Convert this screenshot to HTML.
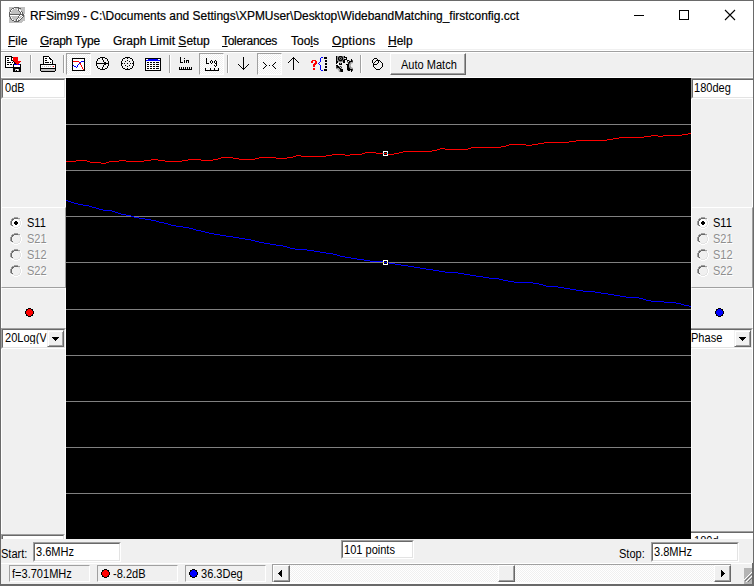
<!DOCTYPE html>
<html><head><meta charset="utf-8">
<style>
*{margin:0;padding:0;box-sizing:border-box}
html,body{width:754px;height:586px;overflow:hidden;background:#f0f0f0}
body{position:relative;font-family:"Liberation Sans",sans-serif;color:#000}
.a{position:absolute}
.t{position:absolute;white-space:nowrap;line-height:1}
.r{position:absolute}
.mi{position:absolute;top:34px;font-size:12px;line-height:14px;white-space:nowrap;-webkit-text-stroke:0.2px #000}
.u{text-decoration:underline;text-underline-offset:1px}
.sep{position:absolute;top:55px;width:2px;height:18px;border-left:1px solid #a0a0a0;border-right:1px solid #fff}
.pressed{position:absolute;top:53px;width:25px;height:22px;border-top:1px solid #a0a0a0;border-left:1px solid #a0a0a0;border-right:1px solid #fff;border-bottom:1px solid #fff;
 background-color:#f0f0f0;background-image:linear-gradient(45deg,#fff 25%,transparent 25%,transparent 75%,#fff 75%),linear-gradient(45deg,#fff 25%,transparent 25%,transparent 75%,#fff 75%);background-size:2px 2px;background-position:0 0,1px 1px}
.edit{position:absolute;background:#fff;border-top:1px solid #a0a0a0;border-left:1px solid #a0a0a0;border-right:1px solid #fff;border-bottom:1px solid #fff}
.edit::before{content:"";position:absolute;left:0;top:0;right:0;bottom:0;border-top:1px solid #696969;border-left:1px solid #696969;border-right:1px solid #e3e3e3;border-bottom:1px solid #e3e3e3}
.nl,.nl::before{border-left:0!important}
.ms{font-size:12px;transform:scaleX(0.92);transform-origin:0 0}
.gl{position:absolute;left:66px;width:625px;height:1px;background:#808080}
.btn2{position:absolute;background:#f0f0f0;border-top:1px solid #fff;border-left:1px solid #fff;border-right:1px solid #696969;border-bottom:1px solid #696969;box-shadow:inset -1px -1px 0 #a0a0a0}
.btn3{position:absolute;background:#f0f0f0;border-top:1px solid #f0f0f0;border-left:1px solid #f0f0f0;border-right:1px solid #696969;border-bottom:1px solid #696969;box-shadow:inset 1px 1px 0 #fff,inset -1px -1px 0 #a0a0a0}
.btn{position:absolute;background:#f0f0f0;border-top:1px solid #fff;border-left:1px solid #fff;border-right:1px solid #696969;border-bottom:1px solid #696969;box-shadow:inset -1px -1px 0 #a0a0a0}
.raised{position:absolute;border-top:1px solid #fff;border-left:1px solid #fff;border-right:1px solid #a0a0a0;border-bottom:1px solid #a0a0a0}
.sp{position:absolute;border-top:1px solid #a0a0a0;border-left:1px solid #a0a0a0;border-right:1px solid #fff;border-bottom:1px solid #fff}
.dis{color:#8e8e8e;text-shadow:1px 1px 0 #fff}
.dot{position:absolute;width:9px;height:9px;border-radius:50%;border:1px solid #000}
.checker{background-color:#f0f0f0;background-image:linear-gradient(45deg,#fff 25%,transparent 25%,transparent 75%,#fff 75%),linear-gradient(45deg,#fff 25%,transparent 25%,transparent 75%,#fff 75%);background-size:2px 2px;background-position:0 0,1px 1px}
</style></head><body>
<!-- frame -->

<div class="a" style="left:1px;top:1px;width:752px;height:48px;background:#fff"></div>
<svg class="a" style="left:9px;top:7px" width="16" height="16" shape-rendering="crispEdges"><path fill="#c0c0c0" d="M0 0h5v1h-5zM10 0h6v1h-6zM0 1h3v1h-3zM6 1h3v1h-3zM12 1h4v1h-4zM0 2h2v1h-2zM4 2h4v1h-4zM11 2h5v1h-5zM0 3h1v1h-1zM3 3h6v1h-6zM12 3h4v1h-4zM0 4h1v1h-1zM2 4h8v1h-8zM13 4h3v1h-3zM2 5h9v1h-9zM14 5h2v1h-2zM1 6h10v1h-10zM14 6h2v1h-2zM15 8h1v1h-1zM1 9h8v1h-8zM11 9h2v1h-2zM15 9h1v1h-1zM0 10h1v1h-1zM3 10h6v1h-6zM10 10h2v1h-2zM14 10h2v1h-2zM0 11h1v1h-1zM2 11h6v1h-6zM10 11h1v1h-1zM13 11h3v1h-3zM0 12h2v1h-2zM4 12h3v1h-3zM9 12h1v1h-1zM12 12h4v1h-4zM0 13h3v1h-3zM6 13h1v1h-1zM11 13h5v1h-5zM0 14h5v1h-5zM10 14h4v1h-4zM0 15h13v1h-13z"/><path fill="#606060" d="M5 0h5v1h-5zM3 1h2v1h-2zM9 1h3v1h-3zM2 2h1v1h-1zM9 2h1v1h-1zM1 3h1v1h-1zM9 3h1v1h-1zM1 4h1v1h-1zM10 4h1v1h-1zM12 4h1v1h-1zM0 5h1v1h-1zM11 5h1v1h-1zM13 5h1v1h-1zM0 6h1v1h-1zM11 6h1v1h-1zM13 6h1v1h-1zM0 7h15v1h-15zM0 8h1v1h-1zM10 8h1v1h-1zM13 8h2v1h-2zM0 9h1v1h-1zM9 9h1v1h-1zM14 9h1v1h-1zM1 10h1v1h-1zM9 10h1v1h-1zM13 10h1v1h-1zM1 11h1v1h-1zM8 11h1v1h-1zM12 11h1v1h-1zM2 12h1v1h-1zM7 12h1v1h-1zM11 12h1v1h-1zM3 13h2v1h-2zM7 13h1v1h-1zM9 13h2v1h-2zM5 14h5v1h-5z"/><path fill="#fff" d="M5 1h1v1h-1zM3 2h1v1h-1zM8 2h1v1h-1zM10 2h1v1h-1zM2 3h1v1h-1zM10 3h2v1h-2zM11 4h1v1h-1zM1 5h1v1h-1zM12 5h1v1h-1zM12 6h1v1h-1zM1 8h9v1h-9zM11 8h2v1h-2zM10 9h1v1h-1zM13 9h1v1h-1zM2 10h1v1h-1zM12 10h1v1h-1zM9 11h1v1h-1zM11 11h1v1h-1zM3 12h1v1h-1zM8 12h1v1h-1zM10 12h1v1h-1zM5 13h1v1h-1zM8 13h1v1h-1zM14 14h2v1h-2zM13 15h3v1h-3z"/></svg>
<div class="t" style="left:30px;top:9px;font-size:11.95px;line-height:14px;-webkit-text-stroke:0.2px #000">RFSim99 - C:\Documents and Settings\XPMUser\Desktop\WidebandMatching_firstconfig.cct</div>
<div class="a" style="left:634px;top:15px;width:10px;height:1px;background:#000"></div>
<div class="a" style="left:679px;top:10px;width:10px;height:10px;border:1px solid #000"></div>
<svg class="a" style="left:724px;top:9px" width="12" height="12"><path d="M1 1L11 11M11 1L1 11" stroke="#000" stroke-width="1.1"/></svg>
<!-- menu -->
<div class="mi" style="left:8px"><span class="u">F</span>ile</div>
<div class="mi" style="left:40px;letter-spacing:-0.27px"><span class="u">G</span>raph Type</div>
<div class="mi" style="left:113px">Graph Limit <span class="u">S</span>etup</div>
<div class="mi" style="left:222px;letter-spacing:-0.3px"><span class="u">T</span>olerances</div>
<div class="mi" style="left:291px">Too<span class="u">l</span>s</div>
<div class="mi" style="left:332px;letter-spacing:0.3px"><span class="u">O</span>ptions</div>
<div class="mi" style="left:388px"><span class="u">H</span>elp</div>
<div class="a" style="left:1px;top:49px;width:752px;height:1px;background:#f0f0f0"></div>
<div class="a" style="left:1px;top:50px;width:752px;height:1px;background:#fff"></div>
<div class="a" style="left:1px;top:51px;width:752px;height:1px;background:#a0a0a0"></div>
<div class="a" style="left:1px;top:52px;width:752px;height:1px;background:#fff"></div>
<div class="a" style="left:1px;top:52px;width:1px;height:26px;background:#fff"></div>
<div class="a" style="left:1px;top:77px;width:752px;height:1px;background:#fff"></div>
<!-- toolbar -->
<div class="sep" style="left:30px"></div>
<div class="sep" style="left:63px"></div>
<div class="pressed" style="left:66px"></div>
<div class="sep" style="left:169px"></div>
<div class="pressed" style="left:199px"></div>
<div class="sep" style="left:227px"></div>
<div class="pressed" style="left:257px"></div>
<div class="sep" style="left:360px"></div>
<svg class="a" style="left:4px;top:55px" width="18" height="17" shape-rendering="crispEdges"><path fill="#000" d="M1 1h7v1h-7zM1 2h1v1h-1zM7 2h2v1h-2zM1 3h1v1h-1zM3 3h2v1h-2zM7 3h1v1h-1zM1 4h1v1h-1zM7 4h1v1h-1zM1 5h1v1h-1zM3 5h2v1h-2zM7 5h2v1h-2zM1 6h1v1h-1zM9 6h1v1h-1zM1 7h1v1h-1zM3 7h4v1h-4zM8 7h1v1h-1zM10 7h1v1h-1zM1 8h1v1h-1zM10 8h2v1h-2zM1 9h1v1h-1zM3 9h2v1h-2zM6 9h2v1h-2zM9 9h1v1h-1zM16 9h1v1h-1zM1 10h1v1h-1zM9 10h1v1h-1zM16 10h1v1h-1zM1 11h1v1h-1zM9 11h1v1h-1zM16 11h1v1h-1zM1 12h16v1h-16zM9 13h8v1h-8zM9 14h2v1h-2zM15 14h2v1h-2zM9 15h2v1h-2zM12 15h1v1h-1zM15 15h2v1h-2zM9 16h8v1h-8z"/><path fill="#fff" d="M2 2h5v1h-5zM2 3h1v1h-1zM5 3h2v1h-2zM8 3h1v1h-1zM2 4h5v1h-5zM8 4h1v1h-1zM2 5h1v1h-1zM5 5h2v1h-2zM2 6h7v1h-7zM2 7h1v1h-1zM7 7h1v1h-1zM9 7h1v1h-1zM2 8h8v1h-8zM2 9h1v1h-1zM5 9h1v1h-1zM8 9h1v1h-1zM2 10h7v1h-7zM10 10h6v1h-6zM2 11h7v1h-7zM10 11h6v1h-6zM12 14h2v1h-2zM13 15h1v1h-1z"/><path fill="#f00" d="M9 2h5v1h-5zM9 3h5v1h-5zM9 4h5v1h-5zM9 5h5v1h-5zM10 6h7v1h-7zM11 7h5v1h-5zM12 8h3v1h-3zM13 9h1v1h-1z"/><path fill="#00f" d="M10 9h3v1h-3zM14 9h2v1h-2z"/><path fill="#c0c0c0" d="M11 14h1v1h-1zM14 14h1v1h-1zM11 15h1v1h-1zM14 15h1v1h-1z"/></svg>
<svg class="a" style="left:38px;top:55px" width="20" height="17" shape-rendering="crispEdges"><path fill="#000" d="M5 1h6v1h-6zM5 2h1v1h-1zM11 2h1v1h-1zM5 3h1v1h-1zM7 3h2v1h-2zM11 3h2v1h-2zM5 4h1v1h-1zM12 4h2v1h-2zM5 5h1v1h-1zM7 5h2v1h-2zM14 5h1v1h-1zM5 6h1v1h-1zM14 6h1v1h-1zM5 7h1v1h-1zM7 7h4v1h-4zM12 7h1v1h-1zM14 7h1v1h-1zM5 8h1v1h-1zM14 8h1v1h-1zM2 9h16v1h-16zM2 10h1v1h-1zM17 10h1v1h-1zM2 11h1v1h-1zM17 11h1v1h-1zM2 12h1v1h-1zM17 12h1v1h-1zM2 13h16v1h-16zM2 14h1v1h-1zM17 14h1v1h-1zM2 15h1v1h-1zM17 15h1v1h-1zM3 16h14v1h-14z"/><path fill="#fff" d="M11 1h1v1h-1zM6 2h5v1h-5zM12 2h1v1h-1zM6 3h1v1h-1zM9 3h2v1h-2zM13 3h1v1h-1zM6 4h6v1h-6zM14 4h1v1h-1zM6 5h1v1h-1zM9 5h5v1h-5zM6 6h8v1h-8zM6 7h1v1h-1zM11 7h1v1h-1zM13 7h1v1h-1zM6 8h8v1h-8zM3 10h14v1h-14zM3 11h1v1h-1zM5 11h1v1h-1zM7 11h1v1h-1zM9 11h1v1h-1zM11 11h1v1h-1zM13 11h1v1h-1zM16 11h1v1h-1zM3 12h14v1h-14z"/><path fill="#c0c0c0" d="M4 11h1v1h-1zM6 11h1v1h-1zM8 11h1v1h-1zM10 11h1v1h-1zM12 11h1v1h-1zM14 11h1v1h-1zM3 14h14v1h-14zM3 15h14v1h-14z"/><path fill="#f00" d="M15 11h1v1h-1z"/></svg>
<svg class="a" style="left:72px;top:58px" width="13" height="13" shape-rendering="crispEdges"><path fill="#000" d="M0 0h13v1h-13zM0 1h1v1h-1zM12 1h1v1h-1zM0 2h1v1h-1zM12 2h1v1h-1zM0 3h1v1h-1zM12 3h1v1h-1zM0 4h1v1h-1zM12 4h1v1h-1zM0 5h1v1h-1zM12 5h1v1h-1zM0 6h1v1h-1zM12 6h1v1h-1zM0 7h1v1h-1zM12 7h1v1h-1zM0 8h1v1h-1zM12 8h1v1h-1zM0 9h1v1h-1zM12 9h1v1h-1zM0 10h1v1h-1zM12 10h1v1h-1zM0 11h1v1h-1zM12 11h1v1h-1zM0 12h13v1h-13z"/><path fill="#fff" d="M1 1h11v1h-11zM1 2h11v1h-11zM7 3h2v1h-2zM1 4h6v1h-6zM9 4h3v1h-3zM1 5h6v1h-6zM9 5h3v1h-3zM1 6h5v1h-5zM7 6h1v1h-1zM9 6h3v1h-3zM2 7h3v1h-3zM6 7h3v1h-3zM10 7h2v1h-2zM1 8h1v1h-1zM4 8h1v1h-1zM6 8h3v1h-3zM10 8h2v1h-2zM1 9h3v1h-3zM5 9h5v1h-5zM11 9h1v1h-1zM1 10h9v1h-9zM11 10h1v1h-1zM1 11h10v1h-10z"/><path fill="#f00" d="M1 3h6v1h-6zM7 4h1v1h-1zM8 5h1v1h-1zM8 6h1v1h-1zM9 7h1v1h-1zM9 8h1v1h-1zM10 9h1v1h-1zM10 10h1v1h-1zM11 11h1v1h-1z"/><path fill="#00f" d="M9 3h3v1h-3zM8 4h1v1h-1zM7 5h1v1h-1zM6 6h1v1h-1zM1 7h1v1h-1zM5 7h1v1h-1zM2 8h2v1h-2zM5 8h1v1h-1zM4 9h1v1h-1z"/></svg>
<svg class="a" style="left:96px;top:57px" width="13" height="13" shape-rendering="crispEdges"><path fill="#000" d="M4 0h5v1h-5zM2 1h2v1h-2zM6 1h1v1h-1zM9 1h2v1h-2zM1 2h1v1h-1zM6 2h1v1h-1zM11 2h1v1h-1zM1 3h1v1h-1zM7 3h1v1h-1zM11 3h1v1h-1zM0 4h1v1h-1zM7 4h1v1h-1zM12 4h1v1h-1zM0 5h1v1h-1zM8 5h2v1h-2zM12 5h1v1h-1zM0 6h13v1h-13zM0 7h1v1h-1zM8 7h2v1h-2zM12 7h1v1h-1zM0 8h1v1h-1zM7 8h1v1h-1zM12 8h1v1h-1zM1 9h1v1h-1zM7 9h1v1h-1zM11 9h1v1h-1zM1 10h1v1h-1zM6 10h1v1h-1zM11 10h1v1h-1zM2 11h2v1h-2zM6 11h1v1h-1zM9 11h2v1h-2zM4 12h5v1h-5z"/></svg>
<svg class="a" style="left:121px;top:57px" width="13" height="13" shape-rendering="crispEdges"><path fill="#000" d="M4 0h5v1h-5zM2 1h2v1h-2zM6 1h1v1h-1zM9 1h2v1h-2zM1 2h1v1h-1zM11 2h1v1h-1zM1 3h1v1h-1zM6 3h1v1h-1zM11 3h1v1h-1zM0 4h1v1h-1zM4 4h1v1h-1zM8 4h1v1h-1zM12 4h1v1h-1zM0 5h1v1h-1zM12 5h1v1h-1zM0 6h2v1h-2zM3 6h1v1h-1zM6 6h1v1h-1zM9 6h1v1h-1zM11 6h2v1h-2zM0 7h1v1h-1zM12 7h1v1h-1zM0 8h1v1h-1zM4 8h1v1h-1zM8 8h1v1h-1zM12 8h1v1h-1zM1 9h1v1h-1zM6 9h1v1h-1zM11 9h1v1h-1zM1 10h1v1h-1zM11 10h1v1h-1zM2 11h2v1h-2zM6 11h1v1h-1zM9 11h2v1h-2zM4 12h5v1h-5z"/></svg>
<svg class="a" style="left:145px;top:58px" width="16" height="13" shape-rendering="crispEdges"><path fill="#000" d="M0 0h16v1h-16zM0 1h1v1h-1zM15 1h1v1h-1zM0 2h1v1h-1zM15 2h1v1h-1zM0 3h1v1h-1zM15 3h1v1h-1zM0 4h1v1h-1zM2 4h2v1h-2zM5 4h2v1h-2zM8 4h2v1h-2zM11 4h3v1h-3zM15 4h1v1h-1zM0 5h1v1h-1zM15 5h1v1h-1zM0 6h1v1h-1zM2 6h2v1h-2zM5 6h2v1h-2zM8 6h2v1h-2zM11 6h3v1h-3zM15 6h1v1h-1zM0 7h1v1h-1zM15 7h1v1h-1zM0 8h1v1h-1zM2 8h2v1h-2zM5 8h2v1h-2zM8 8h2v1h-2zM11 8h3v1h-3zM15 8h1v1h-1zM0 9h1v1h-1zM15 9h1v1h-1zM0 10h1v1h-1zM2 10h2v1h-2zM5 10h2v1h-2zM8 10h2v1h-2zM11 10h3v1h-3zM15 10h1v1h-1zM0 11h1v1h-1zM15 11h1v1h-1zM0 12h16v1h-16z"/><path fill="#fff" d="M1 1h2v1h-2zM13 1h2v1h-2zM1 3h14v1h-14zM1 4h1v1h-1zM4 4h1v1h-1zM7 4h1v1h-1zM10 4h1v1h-1zM14 4h1v1h-1zM1 5h14v1h-14zM1 6h1v1h-1zM4 6h1v1h-1zM7 6h1v1h-1zM10 6h1v1h-1zM14 6h1v1h-1zM1 7h14v1h-14zM1 8h1v1h-1zM4 8h1v1h-1zM7 8h1v1h-1zM10 8h1v1h-1zM14 8h1v1h-1zM1 9h14v1h-14zM1 10h1v1h-1zM4 10h1v1h-1zM7 10h1v1h-1zM10 10h1v1h-1zM14 10h1v1h-1zM1 11h14v1h-14z"/><path fill="#00f" d="M3 1h10v1h-10zM1 2h14v1h-14z"/></svg>
<svg class="a" style="left:179px;top:57px" width="13" height="13" shape-rendering="crispEdges"><path fill="#000" d="M1 0h1v1h-1zM1 1h1v1h-1zM5 1h1v1h-1zM1 2h1v1h-1zM1 3h1v1h-1zM5 3h1v1h-1zM7 3h3v1h-3zM1 4h1v1h-1zM5 4h1v1h-1zM7 4h1v1h-1zM9 4h1v1h-1zM1 5h3v1h-3zM5 5h1v1h-1zM7 5h1v1h-1zM9 5h1v1h-1zM0 10h1v1h-1zM2 10h1v1h-1zM4 10h1v1h-1zM6 10h1v1h-1zM8 10h1v1h-1zM10 10h1v1h-1zM12 10h1v1h-1zM0 11h1v1h-1zM2 11h1v1h-1zM4 11h1v1h-1zM6 11h1v1h-1zM8 11h1v1h-1zM10 11h1v1h-1zM12 11h1v1h-1zM0 12h13v1h-13z"/></svg>
<svg class="a" style="left:205px;top:58px" width="14" height="13" shape-rendering="crispEdges"><path fill="#000" d="M1 0h1v1h-1zM1 1h1v1h-1zM1 2h1v1h-1zM6 2h1v1h-1zM10 2h1v1h-1zM1 3h1v1h-1zM5 3h1v1h-1zM7 3h1v1h-1zM9 3h1v1h-1zM11 3h1v1h-1zM1 4h1v1h-1zM5 4h1v1h-1zM7 4h1v1h-1zM9 4h1v1h-1zM11 4h1v1h-1zM1 5h3v1h-3zM6 5h1v1h-1zM10 5h2v1h-2zM11 6h1v1h-1zM9 7h1v1h-1zM11 7h1v1h-1zM10 8h1v1h-1zM0 10h1v1h-1zM5 10h1v1h-1zM9 10h1v1h-1zM13 10h1v1h-1zM0 11h1v1h-1zM5 11h1v1h-1zM9 11h1v1h-1zM13 11h1v1h-1zM0 12h14v1h-14z"/></svg>
<svg class="a" style="left:238px;top:57px" width="11" height="13" shape-rendering="crispEdges"><path fill="#000" d="M5 0h1v1h-1zM5 1h1v1h-1zM5 2h1v1h-1zM5 3h1v1h-1zM5 4h1v1h-1zM5 5h1v1h-1zM5 6h1v1h-1zM0 7h1v1h-1zM5 7h1v1h-1zM10 7h1v1h-1zM1 8h1v1h-1zM5 8h1v1h-1zM9 8h1v1h-1zM2 9h1v1h-1zM5 9h1v1h-1zM8 9h1v1h-1zM3 10h1v1h-1zM5 10h1v1h-1zM7 10h1v1h-1zM4 11h3v1h-3zM5 12h1v1h-1z"/></svg>
<svg class="a" style="left:263px;top:62px" width="13" height="7" shape-rendering="crispEdges"><path fill="#000" d="M0 0h1v1h-1zM12 0h1v1h-1zM1 1h1v1h-1zM11 1h1v1h-1zM2 2h1v1h-1zM10 2h1v1h-1zM3 3h1v1h-1zM6 3h1v1h-1zM9 3h1v1h-1zM2 4h1v1h-1zM10 4h1v1h-1zM1 5h1v1h-1zM11 5h1v1h-1zM0 6h1v1h-1zM12 6h1v1h-1z"/></svg>
<svg class="a" style="left:288px;top:57px" width="11" height="13" shape-rendering="crispEdges"><path fill="#000" d="M5 0h1v1h-1zM4 1h3v1h-3zM3 2h1v1h-1zM5 2h1v1h-1zM7 2h1v1h-1zM2 3h1v1h-1zM5 3h1v1h-1zM8 3h1v1h-1zM1 4h1v1h-1zM5 4h1v1h-1zM9 4h1v1h-1zM0 5h1v1h-1zM5 5h1v1h-1zM10 5h1v1h-1zM5 6h1v1h-1zM5 7h1v1h-1zM5 8h1v1h-1zM5 9h1v1h-1zM5 10h1v1h-1zM5 11h1v1h-1zM5 12h1v1h-1z"/></svg>
<svg class="a" style="left:308px;top:57px" width="19" height="14" shape-rendering="crispEdges"><path fill="#00f" d="M13 0h2v1h-2zM12 1h1v1h-1zM12 2h1v1h-1zM12 3h1v1h-1zM12 4h1v1h-1zM11 5h1v1h-1zM10 6h1v1h-1zM11 7h1v1h-1zM12 8h1v1h-1zM12 9h1v1h-1zM12 10h1v1h-1zM12 11h1v1h-1zM12 12h1v1h-1zM13 13h2v1h-2z"/><path fill="#000" d="M16 0h3v1h-3zM16 1h3v1h-3zM17 3h2v1h-2zM17 4h2v1h-2zM17 6h2v1h-2zM17 7h2v1h-2zM17 9h2v1h-2zM17 10h2v1h-2zM16 12h3v1h-3zM16 13h3v1h-3z"/><path fill="#f00" d="M4 3h4v1h-4zM3 4h2v1h-2zM7 4h2v1h-2zM3 5h2v1h-2zM7 5h2v1h-2zM6 6h3v1h-3zM5 7h3v1h-3zM5 8h2v1h-2zM5 9h2v1h-2zM5 11h2v1h-2zM5 12h2v1h-2z"/></svg>
<svg class="a" style="left:335px;top:55px" width="18" height="17" viewBox="0 0 18 17">
<defs><clipPath id="gc"><rect x="1" y="1" width="17" height="16"/></clipPath></defs>
<g clip-path="url(#gc)">
<circle cx="5.5" cy="3.5" r="3.3" fill="none" stroke="#909090" stroke-width="1.4"/>
<circle cx="5.5" cy="3.5" r="2" fill="#a0a0a0" stroke="#000" stroke-width="1.3"/>
<rect x="5" y="3" width="1" height="1" fill="#000"/>
<rect x="1" y="1" width="1" height="8" fill="#000"/><rect x="2" y="6" width="1" height="2" fill="#000"/>
<rect x="9" y="1" width="1" height="1" fill="#000"/><rect x="9" y="2" width="3" height="1" fill="#000"/><rect x="11" y="3" width="1" height="1" fill="#000"/><rect x="9" y="4" width="3" height="1" fill="#000"/>
<rect x="8" y="5" width="2" height="3" fill="#000"/>
<rect x="4" y="8" width="3" height="2" fill="#000"/><rect x="5" y="8" width="1" height="1" fill="#909090"/>
<circle cx="18" cy="10.5" r="4.6" fill="none" stroke="#000" stroke-width="1.5"/>
<circle cx="18" cy="10.5" r="3" fill="none" stroke="#909090" stroke-width="1.2"/>
<rect x="12" y="5" width="2" height="1" fill="#000"/><rect x="14" y="6" width="3" height="1" fill="#000"/><rect x="16" y="4" width="1" height="3" fill="#000"/>
<rect x="11" y="9" width="2" height="1" fill="#000"/><rect x="12" y="10" width="1" height="5" fill="#000"/><rect x="13" y="13" width="1" height="1" fill="#000"/>
<rect x="13" y="14" width="2" height="2" fill="#000"/><rect x="16" y="14" width="1" height="3" fill="#000"/>
<circle cx="13.5" cy="6.5" r="1" fill="none" stroke="#000" stroke-width="0.9"/>
<circle cx="13.5" cy="14.5" r="1" fill="none" stroke="#000" stroke-width="0.9"/>
<circle cx="1.5" cy="16.5" r="4.5" fill="none" stroke="#000" stroke-width="1.5"/>
<circle cx="1.5" cy="16.5" r="3" fill="none" stroke="#909090" stroke-width="1.2"/>
<rect x="1" y="10" width="2" height="1" fill="#000"/><rect x="2" y="11" width="2" height="1" fill="#000"/>
<rect x="6" y="14" width="2" height="3" fill="#000"/>
<circle cx="5.5" cy="12.5" r="1" fill="none" stroke="#000" stroke-width="0.9"/>
</g></svg>
<svg class="a" style="left:368px;top:58px" width="16" height="12" shape-rendering="crispEdges"><path fill="#000" d="M6 0h3v1h-3zM5 1h1v1h-1zM9 1h1v1h-1zM4 2h1v1h-1zM8 2h4v1h-4zM4 3h1v1h-1zM7 3h1v1h-1zM10 3h1v1h-1zM12 3h1v1h-1zM4 4h1v1h-1zM6 4h1v1h-1zM10 4h1v1h-1zM13 4h1v1h-1zM5 5h1v1h-1zM9 5h1v1h-1zM14 5h1v1h-1zM5 6h4v1h-4zM14 6h1v1h-1zM5 7h1v1h-1zM14 7h1v1h-1zM5 8h1v1h-1zM14 8h1v1h-1zM6 9h1v1h-1zM13 9h1v1h-1zM7 10h1v1h-1zM12 10h1v1h-1zM8 11h4v1h-4z"/></svg>
<div class="btn" style="left:390px;top:53px;width:76px;height:22px"></div>
<div class="t ms" style="left:401px;top:59px">Auto Match</div>

<!-- plot -->
<div class="a" style="left:66px;top:78px;width:625px;height:461px;background:#000"></div>
<div class="gl" style="top:124px"></div>
<div class="gl" style="top:170px"></div>
<div class="gl" style="top:216px"></div>
<div class="gl" style="top:262px"></div>
<div class="gl" style="top:309px"></div>
<div class="gl" style="top:355px"></div>
<div class="gl" style="top:401px"></div>
<div class="gl" style="top:447px"></div>
<div class="gl" style="top:493px"></div>
<svg class="a" style="left:0;top:0" width="754" height="586" shape-rendering="crispEdges"><path fill="#f00" d="M688 133h3v1h-3zM682 134h6v1h-6zM651 135h7v1h-7zM663 135h19v1h-19zM644 136h7v1h-7zM658 136h5v1h-5zM619 137h25v1h-25zM613 138h6v1h-6zM607 139h6v1h-6zM576 140h31v1h-31zM569 141h7v1h-7zM544 142h25v1h-25zM538 143h6v1h-6zM509 144h17v1h-17zM532 144h6v1h-6zM506 145h3v1h-3zM526 145h6v1h-6zM501 146h5v1h-5zM471 147h30v1h-30zM440 148h5v1h-5zM468 148h3v1h-3zM437 149h3v1h-3zM445 149h23v1h-23zM432 150h5v1h-5zM403 151h29v1h-29zM365 152h11v1h-11zM399 152h4v1h-4zM362 153h3v1h-3zM376 153h7v1h-7zM384 153h3v1h-3zM394 153h5v1h-5zM332 154h13v1h-13zM350 154h12v1h-12zM388 154h6v1h-6zM296 155h5v1h-5zM326 155h6v1h-6zM345 155h5v1h-5zM293 156h3v1h-3zM301 156h25v1h-25zM221 157h12v1h-12zM259 157h17v1h-17zM287 157h6v1h-6zM218 158h3v1h-3zM233 158h6v1h-6zM255 158h4v1h-4zM276 158h11v1h-11zM151 159h7v1h-7zM188 159h13v1h-13zM213 159h5v1h-5zM239 159h16v1h-16zM76 160h11v1h-11zM119 160h7v1h-7zM144 160h7v1h-7zM158 160h7v1h-7zM182 160h6v1h-6zM201 160h12v1h-12zM66 161h10v1h-10zM87 161h3v1h-3zM109 161h10v1h-10zM126 161h18v1h-18zM165 161h17v1h-17zM90 162h11v1h-11zM106 162h3v1h-3zM101 163h5v1h-5z"/><path fill="#00f" d="M66 200h2v1h-2zM68 201h3v1h-3zM71 202h3v1h-3zM74 203h4v1h-4zM78 204h5v1h-5zM83 205h6v1h-6zM89 206h3v1h-3zM92 207h4v1h-4zM96 208h3v1h-3zM99 209h4v1h-4zM103 210h9v1h-9zM112 211h3v1h-3zM115 212h3v1h-3zM118 213h3v1h-3zM121 214h5v1h-5zM126 215h5v1h-5zM131 216h3v1h-3zM134 217h5v1h-5zM139 218h6v1h-6zM145 219h6v1h-6zM151 220h5v1h-5zM156 221h3v1h-3zM159 222h5v1h-5zM164 223h4v1h-4zM168 224h3v1h-3zM171 225h5v1h-5zM176 226h7v1h-7zM183 227h6v1h-6zM189 228h4v1h-4zM193 229h3v1h-3zM196 230h5v1h-5zM201 231h4v1h-4zM205 232h4v1h-4zM209 233h5v1h-5zM214 234h6v1h-6zM220 235h6v1h-6zM226 236h7v1h-7zM233 237h6v1h-6zM239 238h6v1h-6zM245 239h6v1h-6zM251 240h4v1h-4zM255 241h4v1h-4zM259 242h5v1h-5zM264 243h6v1h-6zM270 244h6v1h-6zM276 245h7v1h-7zM283 246h4v1h-4zM287 247h3v1h-3zM290 248h5v1h-5zM295 249h12v1h-12zM307 250h7v1h-7zM314 251h6v1h-6zM320 252h6v1h-6zM326 253h7v1h-7zM333 254h4v1h-4zM337 255h3v1h-3zM340 256h5v1h-5zM345 257h6v1h-6zM351 258h6v1h-6zM357 259h7v1h-7zM364 260h6v1h-6zM370 261h13v1h-13zM384 262h3v1h-3zM388 262h1v1h-1zM389 263h6v1h-6zM395 264h6v1h-6zM401 265h7v1h-7zM408 266h6v1h-6zM414 267h6v1h-6zM420 268h6v1h-6zM426 269h7v1h-7zM433 270h6v1h-6zM439 271h6v1h-6zM445 272h13v1h-13zM458 273h6v1h-6zM464 274h6v1h-6zM470 275h6v1h-6zM476 276h7v1h-7zM483 277h6v1h-6zM489 278h10v1h-10zM499 279h4v1h-4zM503 280h5v1h-5zM508 281h6v1h-6zM514 282h19v1h-19zM533 283h6v1h-6zM539 284h4v1h-4zM543 285h3v1h-3zM546 286h12v1h-12zM558 287h6v1h-6zM564 288h6v1h-6zM570 289h6v1h-6zM576 290h7v1h-7zM583 291h12v1h-12zM595 292h6v1h-6zM601 293h7v1h-7zM608 294h6v1h-6zM614 295h6v1h-6zM620 296h6v1h-6zM626 297h13v1h-13zM639 298h4v1h-4zM643 299h3v1h-3zM646 300h5v1h-5zM651 301h13v1h-13zM664 302h12v1h-12zM676 303h5v1h-5zM681 304h3v1h-3zM684 305h5v1h-5zM689 306h2v1h-2z"/><path fill="#fff" d="M383 151h5v1h-5zM383 152h1v1h-1zM387 152h1v1h-1zM383 154h1v1h-1zM387 154h1v1h-1zM383 155h5v1h-5zM383 260h5v1h-5zM383 261h1v1h-1zM387 261h1v1h-1zM383 263h1v1h-1zM387 263h1v1h-1zM383 264h5v1h-5z"/><path fill="#0ff" d="M383 153h1v1h-1zM387 153h1v1h-1z"/><path fill="#ff0" d="M383 262h1v1h-1zM387 262h1v1h-1z"/></svg>

<!-- left panel -->
<div class="a" style="left:1px;top:99px;width:65px;height:108px;border-left:1px solid #fff;border-right:1px solid #fff"></div>
<div class="raised" style="left:1px;top:207px;width:65px;height:81px"></div>
<div class="a" style="left:1px;top:288px;width:65px;height:247px;border-left:1px solid #fff;border-right:1px solid #fff;border-top:1px solid #fafafa"></div>
<div class="edit" style="left:1px;top:78px;width:65px;height:21px"></div>
<div class="t ms" style="left:5px;top:82px">0dB</div>
<svg class="a" style="left:10px;top:217px" width="12" height="12" shape-rendering="crispEdges"><path fill="#fff" d="M4 2h1v1h-1zM5 2h1v1h-1zM6 2h1v1h-1zM7 2h1v1h-1zM3 3h1v1h-1zM4 3h1v1h-1zM5 3h1v1h-1zM6 3h1v1h-1zM7 3h1v1h-1zM8 3h1v1h-1zM2 4h1v1h-1zM3 4h1v1h-1zM4 4h1v1h-1zM5 4h1v1h-1zM6 4h1v1h-1zM7 4h1v1h-1zM8 4h1v1h-1zM9 4h1v1h-1zM2 5h1v1h-1zM3 5h1v1h-1zM4 5h1v1h-1zM5 5h1v1h-1zM6 5h1v1h-1zM7 5h1v1h-1zM8 5h1v1h-1zM9 5h1v1h-1zM2 6h1v1h-1zM3 6h1v1h-1zM4 6h1v1h-1zM5 6h1v1h-1zM6 6h1v1h-1zM7 6h1v1h-1zM8 6h1v1h-1zM9 6h1v1h-1zM2 7h1v1h-1zM3 7h1v1h-1zM4 7h1v1h-1zM5 7h1v1h-1zM6 7h1v1h-1zM7 7h1v1h-1zM8 7h1v1h-1zM9 7h1v1h-1zM3 8h1v1h-1zM4 8h1v1h-1zM5 8h1v1h-1zM6 8h1v1h-1zM7 8h1v1h-1zM8 8h1v1h-1zM4 9h1v1h-1zM5 9h1v1h-1zM6 9h1v1h-1zM7 9h1v1h-1z"/><path fill="#a0a0a0" d="M4 0h1v1h-1zM5 0h1v1h-1zM6 0h1v1h-1zM7 0h1v1h-1zM2 1h1v1h-1zM3 1h1v1h-1zM8 1h1v1h-1zM9 1h1v1h-1zM1 2h1v1h-1zM1 3h1v1h-1zM0 4h1v1h-1zM0 5h1v1h-1zM0 6h1v1h-1zM0 7h1v1h-1zM1 8h1v1h-1z"/><path fill="#696969" d="M4 1h1v1h-1zM5 1h1v1h-1zM6 1h1v1h-1zM7 1h1v1h-1zM2 2h1v1h-1zM3 2h1v1h-1zM2 3h1v1h-1zM1 4h1v1h-1zM1 5h1v1h-1zM1 6h1v1h-1zM1 7h1v1h-1zM2 8h1v1h-1z"/><path fill="#e3e3e3" d="M8 2h1v1h-1zM9 2h1v1h-1zM9 3h1v1h-1zM10 4h1v1h-1zM10 5h1v1h-1zM10 6h1v1h-1zM10 7h1v1h-1zM9 8h1v1h-1zM2 9h1v1h-1zM3 9h1v1h-1zM8 9h1v1h-1zM9 9h1v1h-1zM4 10h1v1h-1zM5 10h1v1h-1zM6 10h1v1h-1zM7 10h1v1h-1z"/><path fill="#fff" d="M10 2h1v1h-1zM10 3h1v1h-1zM11 4h1v1h-1zM11 5h1v1h-1zM11 6h1v1h-1zM11 7h1v1h-1zM10 8h1v1h-1zM1 9h1v1h-1zM10 9h1v1h-1zM2 10h1v1h-1zM3 10h1v1h-1zM8 10h1v1h-1zM9 10h1v1h-1zM4 11h1v1h-1zM5 11h1v1h-1zM6 11h1v1h-1zM7 11h1v1h-1z"/><path fill="#000" d="M5 4h2v1h1v2h-1v1h-2v-1h-1v-2h1z"/></svg><svg class="a" style="left:10px;top:233px" width="12" height="12" shape-rendering="crispEdges"><path fill="#f0f0f0" d="M4 2h1v1h-1zM5 2h1v1h-1zM6 2h1v1h-1zM7 2h1v1h-1zM3 3h1v1h-1zM4 3h1v1h-1zM5 3h1v1h-1zM6 3h1v1h-1zM7 3h1v1h-1zM8 3h1v1h-1zM2 4h1v1h-1zM3 4h1v1h-1zM4 4h1v1h-1zM5 4h1v1h-1zM6 4h1v1h-1zM7 4h1v1h-1zM8 4h1v1h-1zM9 4h1v1h-1zM2 5h1v1h-1zM3 5h1v1h-1zM4 5h1v1h-1zM5 5h1v1h-1zM6 5h1v1h-1zM7 5h1v1h-1zM8 5h1v1h-1zM9 5h1v1h-1zM2 6h1v1h-1zM3 6h1v1h-1zM4 6h1v1h-1zM5 6h1v1h-1zM6 6h1v1h-1zM7 6h1v1h-1zM8 6h1v1h-1zM9 6h1v1h-1zM2 7h1v1h-1zM3 7h1v1h-1zM4 7h1v1h-1zM5 7h1v1h-1zM6 7h1v1h-1zM7 7h1v1h-1zM8 7h1v1h-1zM9 7h1v1h-1zM3 8h1v1h-1zM4 8h1v1h-1zM5 8h1v1h-1zM6 8h1v1h-1zM7 8h1v1h-1zM8 8h1v1h-1zM4 9h1v1h-1zM5 9h1v1h-1zM6 9h1v1h-1zM7 9h1v1h-1z"/><path fill="#a0a0a0" d="M4 0h1v1h-1zM5 0h1v1h-1zM6 0h1v1h-1zM7 0h1v1h-1zM2 1h1v1h-1zM3 1h1v1h-1zM8 1h1v1h-1zM9 1h1v1h-1zM1 2h1v1h-1zM1 3h1v1h-1zM0 4h1v1h-1zM0 5h1v1h-1zM0 6h1v1h-1zM0 7h1v1h-1zM1 8h1v1h-1z"/><path fill="#696969" d="M4 1h1v1h-1zM5 1h1v1h-1zM6 1h1v1h-1zM7 1h1v1h-1zM2 2h1v1h-1zM3 2h1v1h-1zM2 3h1v1h-1zM1 4h1v1h-1zM1 5h1v1h-1zM1 6h1v1h-1zM1 7h1v1h-1zM2 8h1v1h-1z"/><path fill="#e3e3e3" d="M8 2h1v1h-1zM9 2h1v1h-1zM9 3h1v1h-1zM10 4h1v1h-1zM10 5h1v1h-1zM10 6h1v1h-1zM10 7h1v1h-1zM9 8h1v1h-1zM2 9h1v1h-1zM3 9h1v1h-1zM8 9h1v1h-1zM9 9h1v1h-1zM4 10h1v1h-1zM5 10h1v1h-1zM6 10h1v1h-1zM7 10h1v1h-1z"/><path fill="#fff" d="M10 2h1v1h-1zM10 3h1v1h-1zM11 4h1v1h-1zM11 5h1v1h-1zM11 6h1v1h-1zM11 7h1v1h-1zM10 8h1v1h-1zM1 9h1v1h-1zM10 9h1v1h-1zM2 10h1v1h-1zM3 10h1v1h-1zM8 10h1v1h-1zM9 10h1v1h-1zM4 11h1v1h-1zM5 11h1v1h-1zM6 11h1v1h-1zM7 11h1v1h-1z"/></svg><svg class="a" style="left:10px;top:249px" width="12" height="12" shape-rendering="crispEdges"><path fill="#f0f0f0" d="M4 2h1v1h-1zM5 2h1v1h-1zM6 2h1v1h-1zM7 2h1v1h-1zM3 3h1v1h-1zM4 3h1v1h-1zM5 3h1v1h-1zM6 3h1v1h-1zM7 3h1v1h-1zM8 3h1v1h-1zM2 4h1v1h-1zM3 4h1v1h-1zM4 4h1v1h-1zM5 4h1v1h-1zM6 4h1v1h-1zM7 4h1v1h-1zM8 4h1v1h-1zM9 4h1v1h-1zM2 5h1v1h-1zM3 5h1v1h-1zM4 5h1v1h-1zM5 5h1v1h-1zM6 5h1v1h-1zM7 5h1v1h-1zM8 5h1v1h-1zM9 5h1v1h-1zM2 6h1v1h-1zM3 6h1v1h-1zM4 6h1v1h-1zM5 6h1v1h-1zM6 6h1v1h-1zM7 6h1v1h-1zM8 6h1v1h-1zM9 6h1v1h-1zM2 7h1v1h-1zM3 7h1v1h-1zM4 7h1v1h-1zM5 7h1v1h-1zM6 7h1v1h-1zM7 7h1v1h-1zM8 7h1v1h-1zM9 7h1v1h-1zM3 8h1v1h-1zM4 8h1v1h-1zM5 8h1v1h-1zM6 8h1v1h-1zM7 8h1v1h-1zM8 8h1v1h-1zM4 9h1v1h-1zM5 9h1v1h-1zM6 9h1v1h-1zM7 9h1v1h-1z"/><path fill="#a0a0a0" d="M4 0h1v1h-1zM5 0h1v1h-1zM6 0h1v1h-1zM7 0h1v1h-1zM2 1h1v1h-1zM3 1h1v1h-1zM8 1h1v1h-1zM9 1h1v1h-1zM1 2h1v1h-1zM1 3h1v1h-1zM0 4h1v1h-1zM0 5h1v1h-1zM0 6h1v1h-1zM0 7h1v1h-1zM1 8h1v1h-1z"/><path fill="#696969" d="M4 1h1v1h-1zM5 1h1v1h-1zM6 1h1v1h-1zM7 1h1v1h-1zM2 2h1v1h-1zM3 2h1v1h-1zM2 3h1v1h-1zM1 4h1v1h-1zM1 5h1v1h-1zM1 6h1v1h-1zM1 7h1v1h-1zM2 8h1v1h-1z"/><path fill="#e3e3e3" d="M8 2h1v1h-1zM9 2h1v1h-1zM9 3h1v1h-1zM10 4h1v1h-1zM10 5h1v1h-1zM10 6h1v1h-1zM10 7h1v1h-1zM9 8h1v1h-1zM2 9h1v1h-1zM3 9h1v1h-1zM8 9h1v1h-1zM9 9h1v1h-1zM4 10h1v1h-1zM5 10h1v1h-1zM6 10h1v1h-1zM7 10h1v1h-1z"/><path fill="#fff" d="M10 2h1v1h-1zM10 3h1v1h-1zM11 4h1v1h-1zM11 5h1v1h-1zM11 6h1v1h-1zM11 7h1v1h-1zM10 8h1v1h-1zM1 9h1v1h-1zM10 9h1v1h-1zM2 10h1v1h-1zM3 10h1v1h-1zM8 10h1v1h-1zM9 10h1v1h-1zM4 11h1v1h-1zM5 11h1v1h-1zM6 11h1v1h-1zM7 11h1v1h-1z"/></svg><svg class="a" style="left:10px;top:265px" width="12" height="12" shape-rendering="crispEdges"><path fill="#f0f0f0" d="M4 2h1v1h-1zM5 2h1v1h-1zM6 2h1v1h-1zM7 2h1v1h-1zM3 3h1v1h-1zM4 3h1v1h-1zM5 3h1v1h-1zM6 3h1v1h-1zM7 3h1v1h-1zM8 3h1v1h-1zM2 4h1v1h-1zM3 4h1v1h-1zM4 4h1v1h-1zM5 4h1v1h-1zM6 4h1v1h-1zM7 4h1v1h-1zM8 4h1v1h-1zM9 4h1v1h-1zM2 5h1v1h-1zM3 5h1v1h-1zM4 5h1v1h-1zM5 5h1v1h-1zM6 5h1v1h-1zM7 5h1v1h-1zM8 5h1v1h-1zM9 5h1v1h-1zM2 6h1v1h-1zM3 6h1v1h-1zM4 6h1v1h-1zM5 6h1v1h-1zM6 6h1v1h-1zM7 6h1v1h-1zM8 6h1v1h-1zM9 6h1v1h-1zM2 7h1v1h-1zM3 7h1v1h-1zM4 7h1v1h-1zM5 7h1v1h-1zM6 7h1v1h-1zM7 7h1v1h-1zM8 7h1v1h-1zM9 7h1v1h-1zM3 8h1v1h-1zM4 8h1v1h-1zM5 8h1v1h-1zM6 8h1v1h-1zM7 8h1v1h-1zM8 8h1v1h-1zM4 9h1v1h-1zM5 9h1v1h-1zM6 9h1v1h-1zM7 9h1v1h-1z"/><path fill="#a0a0a0" d="M4 0h1v1h-1zM5 0h1v1h-1zM6 0h1v1h-1zM7 0h1v1h-1zM2 1h1v1h-1zM3 1h1v1h-1zM8 1h1v1h-1zM9 1h1v1h-1zM1 2h1v1h-1zM1 3h1v1h-1zM0 4h1v1h-1zM0 5h1v1h-1zM0 6h1v1h-1zM0 7h1v1h-1zM1 8h1v1h-1z"/><path fill="#696969" d="M4 1h1v1h-1zM5 1h1v1h-1zM6 1h1v1h-1zM7 1h1v1h-1zM2 2h1v1h-1zM3 2h1v1h-1zM2 3h1v1h-1zM1 4h1v1h-1zM1 5h1v1h-1zM1 6h1v1h-1zM1 7h1v1h-1zM2 8h1v1h-1z"/><path fill="#e3e3e3" d="M8 2h1v1h-1zM9 2h1v1h-1zM9 3h1v1h-1zM10 4h1v1h-1zM10 5h1v1h-1zM10 6h1v1h-1zM10 7h1v1h-1zM9 8h1v1h-1zM2 9h1v1h-1zM3 9h1v1h-1zM8 9h1v1h-1zM9 9h1v1h-1zM4 10h1v1h-1zM5 10h1v1h-1zM6 10h1v1h-1zM7 10h1v1h-1z"/><path fill="#fff" d="M10 2h1v1h-1zM10 3h1v1h-1zM11 4h1v1h-1zM11 5h1v1h-1zM11 6h1v1h-1zM11 7h1v1h-1zM10 8h1v1h-1zM1 9h1v1h-1zM10 9h1v1h-1zM2 10h1v1h-1zM3 10h1v1h-1zM8 10h1v1h-1zM9 10h1v1h-1zM4 11h1v1h-1zM5 11h1v1h-1zM6 11h1v1h-1zM7 11h1v1h-1z"/></svg>
<div class="t ms" style="left:27px;top:217px">S11</div>
<div class="t ms dis" style="left:27px;top:233px">S21</div>
<div class="t ms dis" style="left:27px;top:249px">S12</div>
<div class="t ms dis" style="left:27px;top:265px">S22</div>
<svg class="a" style="left:25px;top:308px" width="9" height="9" shape-rendering="crispEdges"><path fill="#f00" d="M3 1h3v1h1v1h1v3h-1v1h-1v1h-3v-1h-1v-1h-1v-3h1v-1h1z"/><path fill="#000" d="M3 0h3v1h2v1h-2v-1h-3v1h-2v-1h2z M1 1h1v1h-1z M7 1h1v1h-1z M1 2h1v1h-1z M7 2h1v1h-1z M0 3h1v3h-1z M8 3h1v3h-1z M1 6h1v1h-1z M7 6h1v1h-1z M1 7h2v1h-2z M6 7h2v1h-2z M3 8h3v1h-3z"/></svg>
<div class="edit" style="left:1px;top:328px;width:65px;height:21px"></div>
<div class="t ms" style="left:5px;top:332px;width:45px;overflow:hidden">20Log(V)</div>
<div class="btn3" style="left:47px;top:330px;width:17px;height:17px"></div>
<svg class="a" style="left:52px;top:337px" width="7" height="4" shape-rendering="crispEdges"><path d="M0 0h7v1h-1v1h-1v1h-1v1h-1v-1h-1v-1h-1v-1h-1z" fill="#000"/></svg>
<div class="edit" style="left:1px;top:534px;width:64px;height:20px"></div>

<!-- right panel -->
<div class="a" style="left:691px;top:99px;width:62px;height:108px;border-left:1px solid #fff;border-right:1px solid #fff"></div>
<div class="raised" style="left:691px;top:207px;width:62px;height:81px"></div>
<div class="a" style="left:691px;top:288px;width:62px;height:245px;border-left:1px solid #fff;border-right:1px solid #fff;border-top:1px solid #fafafa"></div>
<div class="edit" style="left:691px;top:78px;width:64px;height:21px"></div>
<div class="t ms" style="left:694px;top:82px">180deg</div>
<svg class="a" style="left:697px;top:217px" width="12" height="12" shape-rendering="crispEdges"><path fill="#fff" d="M4 2h1v1h-1zM5 2h1v1h-1zM6 2h1v1h-1zM7 2h1v1h-1zM3 3h1v1h-1zM4 3h1v1h-1zM5 3h1v1h-1zM6 3h1v1h-1zM7 3h1v1h-1zM8 3h1v1h-1zM2 4h1v1h-1zM3 4h1v1h-1zM4 4h1v1h-1zM5 4h1v1h-1zM6 4h1v1h-1zM7 4h1v1h-1zM8 4h1v1h-1zM9 4h1v1h-1zM2 5h1v1h-1zM3 5h1v1h-1zM4 5h1v1h-1zM5 5h1v1h-1zM6 5h1v1h-1zM7 5h1v1h-1zM8 5h1v1h-1zM9 5h1v1h-1zM2 6h1v1h-1zM3 6h1v1h-1zM4 6h1v1h-1zM5 6h1v1h-1zM6 6h1v1h-1zM7 6h1v1h-1zM8 6h1v1h-1zM9 6h1v1h-1zM2 7h1v1h-1zM3 7h1v1h-1zM4 7h1v1h-1zM5 7h1v1h-1zM6 7h1v1h-1zM7 7h1v1h-1zM8 7h1v1h-1zM9 7h1v1h-1zM3 8h1v1h-1zM4 8h1v1h-1zM5 8h1v1h-1zM6 8h1v1h-1zM7 8h1v1h-1zM8 8h1v1h-1zM4 9h1v1h-1zM5 9h1v1h-1zM6 9h1v1h-1zM7 9h1v1h-1z"/><path fill="#a0a0a0" d="M4 0h1v1h-1zM5 0h1v1h-1zM6 0h1v1h-1zM7 0h1v1h-1zM2 1h1v1h-1zM3 1h1v1h-1zM8 1h1v1h-1zM9 1h1v1h-1zM1 2h1v1h-1zM1 3h1v1h-1zM0 4h1v1h-1zM0 5h1v1h-1zM0 6h1v1h-1zM0 7h1v1h-1zM1 8h1v1h-1z"/><path fill="#696969" d="M4 1h1v1h-1zM5 1h1v1h-1zM6 1h1v1h-1zM7 1h1v1h-1zM2 2h1v1h-1zM3 2h1v1h-1zM2 3h1v1h-1zM1 4h1v1h-1zM1 5h1v1h-1zM1 6h1v1h-1zM1 7h1v1h-1zM2 8h1v1h-1z"/><path fill="#e3e3e3" d="M8 2h1v1h-1zM9 2h1v1h-1zM9 3h1v1h-1zM10 4h1v1h-1zM10 5h1v1h-1zM10 6h1v1h-1zM10 7h1v1h-1zM9 8h1v1h-1zM2 9h1v1h-1zM3 9h1v1h-1zM8 9h1v1h-1zM9 9h1v1h-1zM4 10h1v1h-1zM5 10h1v1h-1zM6 10h1v1h-1zM7 10h1v1h-1z"/><path fill="#fff" d="M10 2h1v1h-1zM10 3h1v1h-1zM11 4h1v1h-1zM11 5h1v1h-1zM11 6h1v1h-1zM11 7h1v1h-1zM10 8h1v1h-1zM1 9h1v1h-1zM10 9h1v1h-1zM2 10h1v1h-1zM3 10h1v1h-1zM8 10h1v1h-1zM9 10h1v1h-1zM4 11h1v1h-1zM5 11h1v1h-1zM6 11h1v1h-1zM7 11h1v1h-1z"/><path fill="#000" d="M5 4h2v1h1v2h-1v1h-2v-1h-1v-2h1z"/></svg><svg class="a" style="left:697px;top:233px" width="12" height="12" shape-rendering="crispEdges"><path fill="#f0f0f0" d="M4 2h1v1h-1zM5 2h1v1h-1zM6 2h1v1h-1zM7 2h1v1h-1zM3 3h1v1h-1zM4 3h1v1h-1zM5 3h1v1h-1zM6 3h1v1h-1zM7 3h1v1h-1zM8 3h1v1h-1zM2 4h1v1h-1zM3 4h1v1h-1zM4 4h1v1h-1zM5 4h1v1h-1zM6 4h1v1h-1zM7 4h1v1h-1zM8 4h1v1h-1zM9 4h1v1h-1zM2 5h1v1h-1zM3 5h1v1h-1zM4 5h1v1h-1zM5 5h1v1h-1zM6 5h1v1h-1zM7 5h1v1h-1zM8 5h1v1h-1zM9 5h1v1h-1zM2 6h1v1h-1zM3 6h1v1h-1zM4 6h1v1h-1zM5 6h1v1h-1zM6 6h1v1h-1zM7 6h1v1h-1zM8 6h1v1h-1zM9 6h1v1h-1zM2 7h1v1h-1zM3 7h1v1h-1zM4 7h1v1h-1zM5 7h1v1h-1zM6 7h1v1h-1zM7 7h1v1h-1zM8 7h1v1h-1zM9 7h1v1h-1zM3 8h1v1h-1zM4 8h1v1h-1zM5 8h1v1h-1zM6 8h1v1h-1zM7 8h1v1h-1zM8 8h1v1h-1zM4 9h1v1h-1zM5 9h1v1h-1zM6 9h1v1h-1zM7 9h1v1h-1z"/><path fill="#a0a0a0" d="M4 0h1v1h-1zM5 0h1v1h-1zM6 0h1v1h-1zM7 0h1v1h-1zM2 1h1v1h-1zM3 1h1v1h-1zM8 1h1v1h-1zM9 1h1v1h-1zM1 2h1v1h-1zM1 3h1v1h-1zM0 4h1v1h-1zM0 5h1v1h-1zM0 6h1v1h-1zM0 7h1v1h-1zM1 8h1v1h-1z"/><path fill="#696969" d="M4 1h1v1h-1zM5 1h1v1h-1zM6 1h1v1h-1zM7 1h1v1h-1zM2 2h1v1h-1zM3 2h1v1h-1zM2 3h1v1h-1zM1 4h1v1h-1zM1 5h1v1h-1zM1 6h1v1h-1zM1 7h1v1h-1zM2 8h1v1h-1z"/><path fill="#e3e3e3" d="M8 2h1v1h-1zM9 2h1v1h-1zM9 3h1v1h-1zM10 4h1v1h-1zM10 5h1v1h-1zM10 6h1v1h-1zM10 7h1v1h-1zM9 8h1v1h-1zM2 9h1v1h-1zM3 9h1v1h-1zM8 9h1v1h-1zM9 9h1v1h-1zM4 10h1v1h-1zM5 10h1v1h-1zM6 10h1v1h-1zM7 10h1v1h-1z"/><path fill="#fff" d="M10 2h1v1h-1zM10 3h1v1h-1zM11 4h1v1h-1zM11 5h1v1h-1zM11 6h1v1h-1zM11 7h1v1h-1zM10 8h1v1h-1zM1 9h1v1h-1zM10 9h1v1h-1zM2 10h1v1h-1zM3 10h1v1h-1zM8 10h1v1h-1zM9 10h1v1h-1zM4 11h1v1h-1zM5 11h1v1h-1zM6 11h1v1h-1zM7 11h1v1h-1z"/></svg><svg class="a" style="left:697px;top:249px" width="12" height="12" shape-rendering="crispEdges"><path fill="#f0f0f0" d="M4 2h1v1h-1zM5 2h1v1h-1zM6 2h1v1h-1zM7 2h1v1h-1zM3 3h1v1h-1zM4 3h1v1h-1zM5 3h1v1h-1zM6 3h1v1h-1zM7 3h1v1h-1zM8 3h1v1h-1zM2 4h1v1h-1zM3 4h1v1h-1zM4 4h1v1h-1zM5 4h1v1h-1zM6 4h1v1h-1zM7 4h1v1h-1zM8 4h1v1h-1zM9 4h1v1h-1zM2 5h1v1h-1zM3 5h1v1h-1zM4 5h1v1h-1zM5 5h1v1h-1zM6 5h1v1h-1zM7 5h1v1h-1zM8 5h1v1h-1zM9 5h1v1h-1zM2 6h1v1h-1zM3 6h1v1h-1zM4 6h1v1h-1zM5 6h1v1h-1zM6 6h1v1h-1zM7 6h1v1h-1zM8 6h1v1h-1zM9 6h1v1h-1zM2 7h1v1h-1zM3 7h1v1h-1zM4 7h1v1h-1zM5 7h1v1h-1zM6 7h1v1h-1zM7 7h1v1h-1zM8 7h1v1h-1zM9 7h1v1h-1zM3 8h1v1h-1zM4 8h1v1h-1zM5 8h1v1h-1zM6 8h1v1h-1zM7 8h1v1h-1zM8 8h1v1h-1zM4 9h1v1h-1zM5 9h1v1h-1zM6 9h1v1h-1zM7 9h1v1h-1z"/><path fill="#a0a0a0" d="M4 0h1v1h-1zM5 0h1v1h-1zM6 0h1v1h-1zM7 0h1v1h-1zM2 1h1v1h-1zM3 1h1v1h-1zM8 1h1v1h-1zM9 1h1v1h-1zM1 2h1v1h-1zM1 3h1v1h-1zM0 4h1v1h-1zM0 5h1v1h-1zM0 6h1v1h-1zM0 7h1v1h-1zM1 8h1v1h-1z"/><path fill="#696969" d="M4 1h1v1h-1zM5 1h1v1h-1zM6 1h1v1h-1zM7 1h1v1h-1zM2 2h1v1h-1zM3 2h1v1h-1zM2 3h1v1h-1zM1 4h1v1h-1zM1 5h1v1h-1zM1 6h1v1h-1zM1 7h1v1h-1zM2 8h1v1h-1z"/><path fill="#e3e3e3" d="M8 2h1v1h-1zM9 2h1v1h-1zM9 3h1v1h-1zM10 4h1v1h-1zM10 5h1v1h-1zM10 6h1v1h-1zM10 7h1v1h-1zM9 8h1v1h-1zM2 9h1v1h-1zM3 9h1v1h-1zM8 9h1v1h-1zM9 9h1v1h-1zM4 10h1v1h-1zM5 10h1v1h-1zM6 10h1v1h-1zM7 10h1v1h-1z"/><path fill="#fff" d="M10 2h1v1h-1zM10 3h1v1h-1zM11 4h1v1h-1zM11 5h1v1h-1zM11 6h1v1h-1zM11 7h1v1h-1zM10 8h1v1h-1zM1 9h1v1h-1zM10 9h1v1h-1zM2 10h1v1h-1zM3 10h1v1h-1zM8 10h1v1h-1zM9 10h1v1h-1zM4 11h1v1h-1zM5 11h1v1h-1zM6 11h1v1h-1zM7 11h1v1h-1z"/></svg><svg class="a" style="left:697px;top:265px" width="12" height="12" shape-rendering="crispEdges"><path fill="#f0f0f0" d="M4 2h1v1h-1zM5 2h1v1h-1zM6 2h1v1h-1zM7 2h1v1h-1zM3 3h1v1h-1zM4 3h1v1h-1zM5 3h1v1h-1zM6 3h1v1h-1zM7 3h1v1h-1zM8 3h1v1h-1zM2 4h1v1h-1zM3 4h1v1h-1zM4 4h1v1h-1zM5 4h1v1h-1zM6 4h1v1h-1zM7 4h1v1h-1zM8 4h1v1h-1zM9 4h1v1h-1zM2 5h1v1h-1zM3 5h1v1h-1zM4 5h1v1h-1zM5 5h1v1h-1zM6 5h1v1h-1zM7 5h1v1h-1zM8 5h1v1h-1zM9 5h1v1h-1zM2 6h1v1h-1zM3 6h1v1h-1zM4 6h1v1h-1zM5 6h1v1h-1zM6 6h1v1h-1zM7 6h1v1h-1zM8 6h1v1h-1zM9 6h1v1h-1zM2 7h1v1h-1zM3 7h1v1h-1zM4 7h1v1h-1zM5 7h1v1h-1zM6 7h1v1h-1zM7 7h1v1h-1zM8 7h1v1h-1zM9 7h1v1h-1zM3 8h1v1h-1zM4 8h1v1h-1zM5 8h1v1h-1zM6 8h1v1h-1zM7 8h1v1h-1zM8 8h1v1h-1zM4 9h1v1h-1zM5 9h1v1h-1zM6 9h1v1h-1zM7 9h1v1h-1z"/><path fill="#a0a0a0" d="M4 0h1v1h-1zM5 0h1v1h-1zM6 0h1v1h-1zM7 0h1v1h-1zM2 1h1v1h-1zM3 1h1v1h-1zM8 1h1v1h-1zM9 1h1v1h-1zM1 2h1v1h-1zM1 3h1v1h-1zM0 4h1v1h-1zM0 5h1v1h-1zM0 6h1v1h-1zM0 7h1v1h-1zM1 8h1v1h-1z"/><path fill="#696969" d="M4 1h1v1h-1zM5 1h1v1h-1zM6 1h1v1h-1zM7 1h1v1h-1zM2 2h1v1h-1zM3 2h1v1h-1zM2 3h1v1h-1zM1 4h1v1h-1zM1 5h1v1h-1zM1 6h1v1h-1zM1 7h1v1h-1zM2 8h1v1h-1z"/><path fill="#e3e3e3" d="M8 2h1v1h-1zM9 2h1v1h-1zM9 3h1v1h-1zM10 4h1v1h-1zM10 5h1v1h-1zM10 6h1v1h-1zM10 7h1v1h-1zM9 8h1v1h-1zM2 9h1v1h-1zM3 9h1v1h-1zM8 9h1v1h-1zM9 9h1v1h-1zM4 10h1v1h-1zM5 10h1v1h-1zM6 10h1v1h-1zM7 10h1v1h-1z"/><path fill="#fff" d="M10 2h1v1h-1zM10 3h1v1h-1zM11 4h1v1h-1zM11 5h1v1h-1zM11 6h1v1h-1zM11 7h1v1h-1zM10 8h1v1h-1zM1 9h1v1h-1zM10 9h1v1h-1zM2 10h1v1h-1zM3 10h1v1h-1zM8 10h1v1h-1zM9 10h1v1h-1zM4 11h1v1h-1zM5 11h1v1h-1zM6 11h1v1h-1zM7 11h1v1h-1z"/></svg>
<div class="t ms" style="left:713px;top:217px">S11</div>
<div class="t ms dis" style="left:713px;top:233px">S21</div>
<div class="t ms dis" style="left:713px;top:249px">S12</div>
<div class="t ms dis" style="left:713px;top:265px">S22</div>
<svg class="a" style="left:715px;top:308px" width="9" height="9" shape-rendering="crispEdges"><path fill="#00f" d="M3 1h3v1h1v1h1v3h-1v1h-1v1h-3v-1h-1v-1h-1v-3h1v-1h1z"/><path fill="#000" d="M3 0h3v1h2v1h-2v-1h-3v1h-2v-1h2z M1 1h1v1h-1z M7 1h1v1h-1z M1 2h1v1h-1z M7 2h1v1h-1z M0 3h1v3h-1z M8 3h1v3h-1z M1 6h1v1h-1z M7 6h1v1h-1z M1 7h2v1h-2z M6 7h2v1h-2z M3 8h3v1h-3z"/></svg>
<div class="edit nl" style="left:691px;top:328px;width:62px;height:21px"></div>
<div class="t ms" style="left:691px;top:332px">Phase</div>
<div class="btn3" style="left:734px;top:330px;width:17px;height:17px"></div>
<svg class="a" style="left:739px;top:337px" width="7" height="4" shape-rendering="crispEdges"><path d="M0 0h7v1h-1v1h-1v1h-1v1h-1v-1h-1v-1h-1v-1h-1z" fill="#000"/></svg>
<div class="edit nl" style="left:691px;top:531px;width:64px;height:20px"></div>
<div class="t ms" style="left:694px;top:535px">180d</div>
<!-- re-cover bottom region below plot -->
<div class="a" style="left:1px;top:539px;width:752px;height:45px;background:#f0f0f0"></div>

<!-- bottom -->
<div class="t ms" style="left:1px;top:548px">Start:</div>
<div class="edit" style="left:33px;top:542px;width:88px;height:20px"></div>
<div class="t ms" style="left:36px;top:546px">3.6MHz</div>
<div class="edit" style="left:341px;top:540px;width:73px;height:19px"></div>
<div class="t ms" style="left:344px;top:544px">101 points</div>
<div class="t ms" style="left:619px;top:548px">Stop:</div>
<div class="edit" style="left:651px;top:542px;width:88px;height:20px"></div>
<div class="t ms" style="left:654px;top:546px">3.8MHz</div>

<!-- status bar -->
<div class="a" style="left:1px;top:563px;width:752px;height:1px;background:#fff"></div>
<div class="sp" style="left:9px;top:565px;width:81px;height:17px"></div>
<div class="t ms" style="left:12px;top:568px">f=3.701MHz</div>
<div class="sp" style="left:97px;top:565px;width:81px;height:17px"></div>
<svg class="a" style="left:101px;top:569px" width="9" height="9" shape-rendering="crispEdges"><path fill="#f00" d="M3 1h3v1h1v1h1v3h-1v1h-1v1h-3v-1h-1v-1h-1v-3h1v-1h1z"/><path fill="#000" d="M3 0h3v1h2v1h-2v-1h-3v1h-2v-1h2z M1 1h1v1h-1z M7 1h1v1h-1z M1 2h1v1h-1z M7 2h1v1h-1z M0 3h1v3h-1z M8 3h1v3h-1z M1 6h1v1h-1z M7 6h1v1h-1z M1 7h2v1h-2z M6 7h2v1h-2z M3 8h3v1h-3z"/></svg>
<div class="t ms" style="left:113px;top:568px">-8.2dB</div>
<div class="sp" style="left:185px;top:565px;width:81px;height:17px"></div>
<svg class="a" style="left:189px;top:569px" width="9" height="9" shape-rendering="crispEdges"><path fill="#00f" d="M3 1h3v1h1v1h1v3h-1v1h-1v1h-3v-1h-1v-1h-1v-3h1v-1h1z"/><path fill="#000" d="M3 0h3v1h2v1h-2v-1h-3v1h-2v-1h2z M1 1h1v1h-1z M7 1h1v1h-1z M1 2h1v1h-1z M7 2h1v1h-1z M0 3h1v3h-1z M8 3h1v3h-1z M1 6h1v1h-1z M7 6h1v1h-1z M1 7h2v1h-2z M6 7h2v1h-2z M3 8h3v1h-3z"/></svg>
<div class="t ms" style="left:201px;top:568px">36.3Deg</div>
<!-- scrollbar -->
<div class="a checker" style="left:272px;top:564px;width:459px;height:18px;border-top:1px solid #a0a0a0;border-left:1px solid #a0a0a0"></div>
<div class="a" style="left:272px;top:582px;width:459px;height:2px;background:#fff"></div>
<div class="btn2" style="left:273px;top:565px;width:17px;height:17px"></div>
<svg class="a" style="left:278px;top:570px" width="4" height="7" shape-rendering="crispEdges"><path d="M3 0h1v7h-1v-1h-1v-1h-1v-1h-1v-1h1v-1h1v-1h1z" fill="#000"/></svg>
<div class="btn2" style="left:498px;top:565px;width:17px;height:17px"></div>
<div class="btn2" style="left:714px;top:565px;width:17px;height:17px"></div>
<svg class="a" style="left:721px;top:570px" width="4" height="7" shape-rendering="crispEdges"><path d="M0 0h1v1h1v1h1v1h1v1h-1v1h-1v1h-1v1h-1z" fill="#000"/></svg>
<!-- size grip -->
<svg class="a" style="left:744px;top:568px" width="8" height="16" shape-rendering="crispEdges">
<rect x="0" y="0" width="8" height="16" fill="#b4b4b4"/>
<path d="M7 4h1v1h-1v1h-1v1h-1v1h-1v1h-1v1h-1v1h-1v1h-1v1h-1v-1h1v-1h1v-1h1v-1h1v-1h1v-1h1v-1h1z" fill="#fff"/>
<path d="M7 6h1v1h-1v1h-1v1h-1v1h-1v1h-1v1h-1v1h-1v-1h1v-1h1v-1h1v-1h1v-1h1v-1h1z" fill="#707070"/>
<path d="M7 8h1v1h-1v1h-1v1h-1v1h-1v1h-1v1h-1v-1h1v-1h1v-1h1v-1h1v-1h1z" fill="#fff"/>
<path d="M7 10h1v1h-1v1h-1v1h-1v1h-1v-1h1v-1h1v-1h1z" fill="#707070"/>
</svg>
<div class="a" style="left:752px;top:563px;width:2px;height:23px;background:#6a6a6a"></div>
<div class="a" style="left:0;top:0;width:754px;height:586px;border:1px solid #6a6a6a;border-bottom:2px solid #6a6a6a"></div>
</body></html>
